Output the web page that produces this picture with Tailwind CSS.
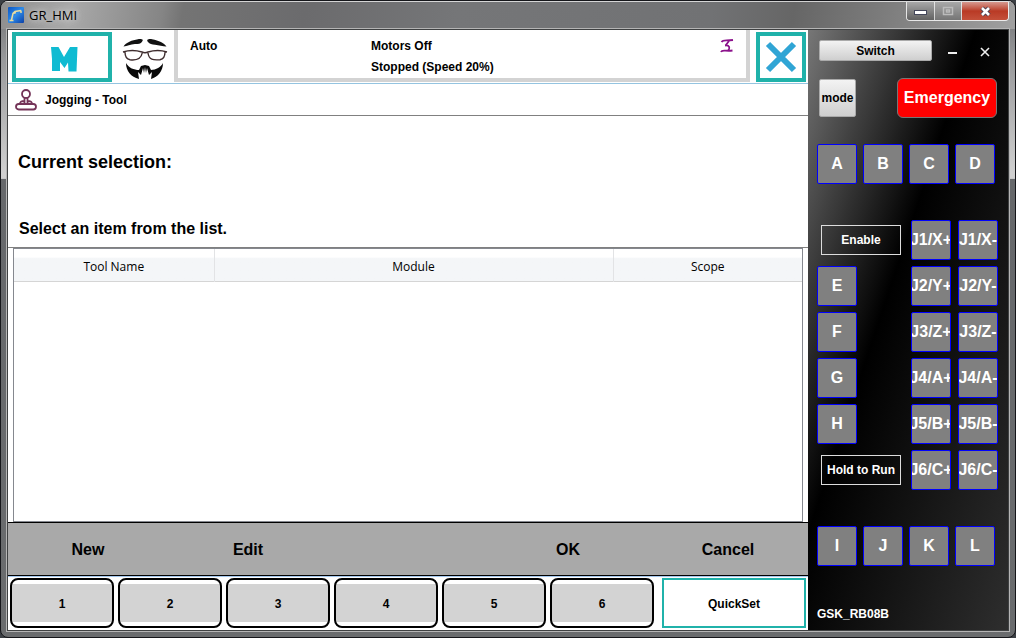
<!DOCTYPE html>
<html lang="en">
<head>
<meta charset="utf-8">
<title>GR_HMI</title>
<script src="https://cdn.jsdelivr.net/npm/@tailwindcss/browser@4"></script>
</head>
<body class="bg-[#3c4045] font-['Liberation_Sans',Arial,sans-serif]">
<div class="flex h-screen flex-col overflow-hidden rounded-lg border border-[#15161a] bg-[linear-gradient(to_bottom,#6f7072_0%,#97989a_9%,#d0d0d0_27%,#d0d0d0_27.9%,#66686b_28%,#6a6c6e_100%)]">
  <header class="flex h-7 shrink-0 items-start border-t border-white/70 bg-[linear-gradient(100deg,#8e8e8e_0%,#a9a9a9_7%,#858585_16%,#747474_18%,#6b6b6d_30%,#757678_45%,#717274_70%,#666_78%,#7a7a7a_86%,#a0a0a0_100%)] pr-1.5 pl-1.5">
    <div class="flex items-center gap-1 pt-1">
      <svg class="size-4.5" viewBox="0 0 18 18" aria-hidden="true">
        <defs><linearGradient id="app" x1="0" y1="0" x2="1" y2="1"><stop offset="0" stop-color="#0a55c4"/><stop offset=".5" stop-color="#2f8be8"/><stop offset="1" stop-color="#0b3fa6"/></linearGradient></defs>
        <rect x="1" y="1" width="16" height="16" rx="1" fill="url(#app)"/>
        <path d="M2.500 14.500h4M4.500 14 6 7.500 8 5.500 14 4.500M14 4.500v2.500M6 7.500l3-1" fill="none" stroke="#e9dca0" stroke-width="1.500"/>
      </svg>
      <h1 class="font-['Open_Sans',sans-serif] text-[13px] leading-4 text-black [text-shadow:0_0_6px_#ddd,0_0_8px_#ccc]">GR_HMI</h1>
    </div>
    <div class="ml-auto flex h-[19px] overflow-hidden rounded-b border border-t-0 border-white/80">
      <button class="flex w-[28px] items-center justify-center border-r border-white/70 bg-linear-to-b from-[#a8a8a8] to-[#626262]" aria-label="Minimize">
        <svg class="mt-1 h-[6px] w-[13px]" viewBox="0 0 13 6"><rect x=".5" y=".5" width="12" height="4" fill="#fff" stroke="#44475a"/></svg>
      </button>
      <button class="flex w-[27px] items-center justify-center border-r border-white/70 bg-linear-to-b from-[#a8a8a8] to-[#757575]" aria-label="Maximize">
        <svg class="h-[10px] w-[12px]" viewBox="0 0 12 10"><path d="M1.500 1.500h9v7h-9zM4.500 4h3v2h-3z" fill="none" stroke="#bbb" stroke-width="1.500"/></svg>
      </button>
      <button class="flex w-[46px] items-center justify-center bg-linear-to-b from-[#d5988f] via-[#b93a25] to-[#c4503a]" aria-label="Close">
        <svg class="h-[11px] w-[13px]" viewBox="0 0 13 11"><path d="m3 2 7 7M10 2 3 9" stroke="#454050" stroke-width="4.500"/><path d="m3 2 7 7M10 2 3 9" stroke="#fff" stroke-width="2.600"/></svg>
      </button>
    </div>
  </header>
  <div class="mx-1.5 mb-1.5 flex min-h-0 flex-1 border border-[#3f4142] outline outline-[#b5b5b5]">
    <main class="flex min-w-0 flex-1 flex-col bg-white text-xs font-bold text-black">
      <section class="flex h-[54px] shrink-0 border-b border-[#94c4e0] pr-0.5 pl-1">
        <button class="mt-0.5 mb-px flex w-[100px] items-center justify-center border-4 border-[#20b2aa]" aria-label="Menu">
          <svg class="mt-1 ml-1 h-[26px] w-[28px]" viewBox="0 0 28 26" aria-hidden="true"><path d="M1 1h7.500L14 11 20 1h7.500l-1 24.500h-8l-.5-9-3.500 5.500-4.500-6V25H2V13z" fill="#0fbbd2"/></svg>
        </button>
        <svg class="mt-2 ml-2.5 h-[42px] w-[46px]" viewBox="0 0 46 42" aria-hidden="true">
          <path d="M1.500 8.500C4 4.500 10 2 16 1.200c4-.4 6 .5 4 2.500-1 2-4 2.300-7 2.300C8.500 6.500 5 8 1.500 8.500zM44.500 8.500C42 5 37 2.500 30 1.200c-4-.4-6 .7-4 2.700 1.500 2 4 2.300 7 2.800 4 .6 7.500 1.600 11.500 1.800z" fill="#111"/>
          <path d="M1 14c5-1.600 13-1.800 19 0q3 1.500 6 0c6-1.800 14-1.600 19 0M3 14c0 4 1 7 5 7.800 6 .7 11 0 12.200-6.800M26 15c1 7 5 7.300 12 6.800 4-.8 5-3.800 5-7.800" fill="none" stroke="#3f2d2e" stroke-width="1.400"/>
          <path d="M4 25c3 5 8 7 13 7l2-4 4-1 4 1 2 4c5 0 10-3 12-7 0 8-5 14-12 16l1-7-3 3-2-7-1 5-1-6-1 6-1-5-2 7-3-3 1 7C9 39 4 33 4 25z" fill="#090909"/>
        </svg>
        <div class="mb-px ml-1.5 flex min-w-0 flex-1 border-4 border-t-0 border-[#d3d3d3] pl-3">
          <p class="w-[181px] pt-2 leading-4">Auto</p>
          <div class="flex-1 pt-2 leading-4"><p>Motors Off</p><p class="mt-[5px]">Stopped (Speed 20%)</p></div>
          <svg class="mt-2 mr-3 h-[16px] w-[14px]" viewBox="0 0 14 16" aria-hidden="true"><path d="M1.500 4C3 1.500 6 3 13 2M9 3 5.500 7.500M5 7.500c5-.5 5.500 3 2.500 5.500M1 14c1-3 4-.5 11.500-1.500" fill="none" stroke="#8b118b" stroke-width="1.800"/></svg>
        </div>
        <button class="mt-0.5 mb-px ml-1.5 flex w-[50px] items-center justify-center border-4 border-[#20b2aa]" aria-label="Close page">
          <svg class="size-[32px]" viewBox="0 0 32 32" aria-hidden="true"><path d="m3 3 26 26M29 3 3 29" stroke="#30a5d5" stroke-width="6"/></svg>
        </button>
      </section>
      <section class="flex h-8 shrink-0 items-center gap-2 border-b border-[#808080] pt-px pl-[7px]">
        <svg class="size-[22px]" viewBox="0 0 22 22" fill="none" stroke="#743458" stroke-width="1.800" aria-hidden="true"><circle cx="11" cy="5" r="4"/><path d="M9.500 9v6M12.500 9v6M5 15c0-3 2-3 4.500-3M17 15c0-3-2-3-4.500-3"/><rect x="1" y="15" width="20" height="5.500" rx="2.700"/></svg>
        <h2>Jogging - Tool</h2>
      </section>
      <section class="flex h-[132px] shrink-0 flex-col justify-between border-b border-[#808080] px-2.5 pt-9 pb-2 text-black">
        <h3 class="text-lg leading-5">Current selection:</h3>
        <p class="pl-px text-base leading-5">Select an item from the list.</p>
      </section>
      <div class="mr-[5px] ml-[5px] flex-1 border border-[#85888f]">
        <table class="w-full table-fixed border-collapse font-['Open_Sans',sans-serif] text-xs">
          <colgroup><col class="w-[200px]"><col><col class="w-[189px]"></colgroup>
          <thead class="bg-linear-to-b from-white from-25% to-[#f4f6f8] to-30%">
            <tr class="h-8 border-b border-[#d5d5d5]">
              <th class="border-r border-[#e2e3e5] p-0 pt-1 font-normal">Tool Name</th>
              <th class="border-r border-[#e2e3e5] p-0 pt-1 font-normal">Module</th>
              <th class="p-0 pt-1 font-normal">Scope</th>
            </tr>
          </thead>
          <tbody></tbody>
        </table>
      </div>
      <nav class="grid h-[54px] shrink-0 grid-cols-5 border-y border-black bg-[#a9a9a9] pt-px text-base" aria-label="Actions">
        <button>New</button><button>Edit</button><span></span><button>OK</button><button>Cancel</button>
      </nav>
      <nav class="flex h-[54px] shrink-0 border-t border-[#a5c9ef] px-0.5 pt-px pb-0.5" aria-label="Function keys">
        <div class="grid flex-1 grid-cols-6 gap-1">
          <button class="rounded-lg border-2 border-black bg-[linear-gradient(to_bottom,#fff_4px,#d3d3d3_4px,#d3d3d3_42px,#fff_42px)] pt-0.5">1</button>
          <button class="rounded-lg border-2 border-black bg-[linear-gradient(to_bottom,#fff_4px,#d3d3d3_4px,#d3d3d3_42px,#fff_42px)] pt-0.5">2</button>
          <button class="rounded-lg border-2 border-black bg-[linear-gradient(to_bottom,#fff_4px,#d3d3d3_4px,#d3d3d3_42px,#fff_42px)] pt-0.5">3</button>
          <button class="rounded-lg border-2 border-black bg-[linear-gradient(to_bottom,#fff_4px,#d3d3d3_4px,#d3d3d3_42px,#fff_42px)] pt-0.5">4</button>
          <button class="rounded-lg border-2 border-black bg-[linear-gradient(to_bottom,#fff_4px,#d3d3d3_4px,#d3d3d3_42px,#fff_42px)] pt-0.5">5</button>
          <button class="rounded-lg border-2 border-black bg-[linear-gradient(to_bottom,#fff_4px,#d3d3d3_4px,#d3d3d3_42px,#fff_42px)] pt-0.5">6</button>
        </div>
        <button class="ml-2 w-[144px] border-2 border-[#20b2aa] pt-0.5">QuickSet</button>
      </nav>
    </main>
    <aside class="flex w-[200px] shrink-0 flex-col bg-[linear-gradient(to_bottom_right,#777_0%,#000_42%,#2e2e2e_100%)] pt-2.5 pr-2.5 pl-[9px] text-base font-bold text-white">
      <div class="flex h-[21px] items-center pl-0.5">
        <button class="h-[21px] w-[113px] rounded-xs border border-[#aaa] bg-linear-to-b from-[#f3f3f3] to-[#cfcfcf] text-xs text-black">Switch</button>
        <button class="ml-[15px] pt-1" aria-label="Hide panel"><svg class="size-[10px]" viewBox="0 0 10 10"><path d="M1 5h9" stroke="#eee" stroke-width="2"/></svg></button>
        <button class="ml-[23px] pt-0.5" aria-label="Close panel"><svg class="size-[10px]" viewBox="0 0 10 10"><path d="m1 1 8 8M9 1 1 9" stroke="#eee" stroke-width="1.600"/></svg></button>
      </div>
      <div class="mt-[17px] flex h-10 items-center justify-between pr-px pl-0.5">
        <button class="flex h-[38px] w-[37px] items-center justify-center rounded-xs border border-[#aaa] bg-linear-to-b from-[#f3f3f3] to-[#cfcfcf] text-xs text-black">mode</button>
        <button class="h-10 w-[100px] rounded-md border border-[#777] bg-[#f00]">Emergency</button>
      </div>
      <div class="mt-[26px] flex gap-1.5">
        <button class="size-10 rounded-xs border border-[#00f] bg-[#808080]">A</button>
        <button class="size-10 rounded-xs border border-[#00f] bg-[#808080]">B</button>
        <button class="size-10 rounded-xs border border-[#00f] bg-[#808080]">C</button>
        <button class="size-10 rounded-xs border border-[#00f] bg-[#808080]">D</button>
      </div>
      <div class="mt-9 flex justify-between">
        <div class="flex flex-col items-start gap-1.5">
          <div class="flex h-10 items-center pl-1"><button class="h-[30px] w-20 border border-[#ddd] text-xs">Enable</button></div>
          <button class="size-10 rounded-xs border border-[#00f] bg-[#808080]">E</button>
          <button class="size-10 rounded-xs border border-[#00f] bg-[#808080]">F</button>
          <button class="size-10 rounded-xs border border-[#00f] bg-[#808080]">G</button>
          <button class="size-10 rounded-xs border border-[#00f] bg-[#808080]">H</button>
          <div class="flex h-10 items-center pl-1"><button class="h-[30px] w-20 border border-[#ddd] text-xs">Hold to Run</button></div>
        </div>
        <div class="grid grid-cols-[40px_40px] gap-x-[7px] gap-y-1.5">
          <button class="flex size-10 items-center justify-center overflow-hidden rounded-xs border border-[#00f] bg-[#808080]">J1/X+</button>
          <button class="flex size-10 items-center justify-center overflow-hidden rounded-xs border border-[#00f] bg-[#808080]">J1/X-</button>
          <button class="flex size-10 items-center justify-center overflow-hidden rounded-xs border border-[#00f] bg-[#808080]">J2/Y+</button>
          <button class="flex size-10 items-center justify-center overflow-hidden rounded-xs border border-[#00f] bg-[#808080]">J2/Y-</button>
          <button class="flex size-10 items-center justify-center overflow-hidden rounded-xs border border-[#00f] bg-[#808080]">J3/Z+</button>
          <button class="flex size-10 items-center justify-center overflow-hidden rounded-xs border border-[#00f] bg-[#808080]">J3/Z-</button>
          <button class="flex size-10 items-center justify-center overflow-hidden rounded-xs border border-[#00f] bg-[#808080]">J4/A+</button>
          <button class="flex size-10 items-center justify-center overflow-hidden rounded-xs border border-[#00f] bg-[#808080]">J4/A-</button>
          <button class="flex size-10 items-center justify-center overflow-hidden rounded-xs border border-[#00f] bg-[#808080]">J5/B+</button>
          <button class="flex size-10 items-center justify-center overflow-hidden rounded-xs border border-[#00f] bg-[#808080]">J5/B-</button>
          <button class="flex size-10 items-center justify-center overflow-hidden rounded-xs border border-[#00f] bg-[#808080]">J6/C+</button>
          <button class="flex size-10 items-center justify-center overflow-hidden rounded-xs border border-[#00f] bg-[#808080]">J6/C-</button>
        </div>
      </div>
      <div class="mt-9 flex gap-1.5">
        <button class="size-10 rounded-xs border border-[#00f] bg-[#808080]">I</button>
        <button class="size-10 rounded-xs border border-[#00f] bg-[#808080]">J</button>
        <button class="size-10 rounded-xs border border-[#00f] bg-[#808080]">K</button>
        <button class="size-10 rounded-xs border border-[#00f] bg-[#808080]">L</button>
      </div>
      <p class="mt-auto pb-2 text-xs leading-4">GSK_RB08B</p>
    </aside>
  </div>
</div>
</body>
</html>
